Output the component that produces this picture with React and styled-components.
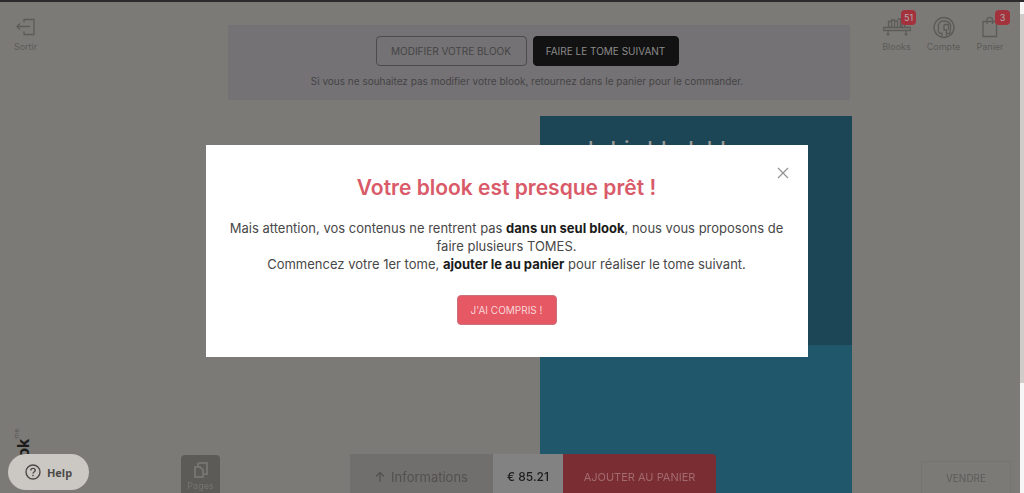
import React from "react";
import styled, { createGlobalStyle, ThemeProvider } from "styled-components";

const theme = {
  page: "#7b7a77",
  banner: "#747274",
  line: "#5c5b58",
  ink: "#4a4948",
  red: "#e55864",
  redDim: "#7a2d33",
  badge: "#a3323d",
  coverTop: "#1c4555",
  coverBottom: "#21576b",
};

const GlobalStyle = createGlobalStyle`
  * {
    box-sizing: border-box;
  }
  body {
    margin: 0;
    background-color: #7b7a77;
    font-family: Inter, "Open Sans", sans-serif;
  }
  button {
    margin: 0;
    padding: 0;
    border: none;
    font-family: inherit;
    cursor: pointer;
  }
`;

const Screen = styled.div`
  display: flex;
  flex-direction: column;
  height: 100vh;
  overflow: hidden;
  border-top: 2px solid #2b2a2c;
  background-color: ${(props) => props.theme.page};
`;

const Body = styled.div`
  display: flex;
  flex: 1;
  min-height: 0;
`;

const Side = styled.aside`
  display: flex;
  flex-direction: column;
  justify-content: space-between;
  align-items: flex-start;
  width: 228px;
  padding: 14px 13px 0;
`;

const NavItem = styled.a`
  position: relative;
  display: flex;
  flex-direction: column;
  align-items: center;
  gap: 1px;
  width: ${(props) => props.$width}px;
  color: ${(props) => props.theme.line};
  font-size: 9px;
  line-height: 12px;
  text-decoration: none;
  & svg {
    display: block;
    width: 28px;
    height: 24px;
    fill: none;
    stroke: currentColor;
    stroke-width: 1.3;
  }
`;

const Badge = styled.span`
  position: absolute;
  top: -6px;
  left: ${(props) => props.$left}px;
  width: 15px;
  height: 15px;
  border-radius: 4px;
  background-color: ${(props) => props.theme.badge};
  color: #b5adad;
  font-size: 9px;
  line-height: 15px;
  text-align: center;
`;

const Brand = styled.div`
  height: 65px;
  overflow: hidden;
  writing-mode: vertical-rl;
  transform: rotate(180deg);
  color: #1c1c1c;
  font-size: 16px;
  font-weight: 700;
  line-height: 20px;
  text-align: right;
  & sup {
    color: ${(props) => props.theme.line};
    font-size: 7px;
    font-weight: 400;
    line-height: 0;
  }
`;

const Main = styled.main`
  display: flex;
  flex: 1;
  flex-direction: column;
  gap: 16px;
  padding-top: 23px;
`;

const Banner = styled.section`
  display: flex;
  flex-direction: column;
  align-items: center;
  gap: 7px;
  margin-right: 2px;
  padding: 11px 24px 10px 0;
  background-color: ${(props) => props.theme.banner};
  color: #454446;
  font-size: 10px;
  line-height: 17px;
  & p {
    margin: 0;
  }
`;

const Actions = styled.div`
  display: flex;
  gap: 6px;
`;

const Action = styled.button`
  width: ${(props) => (props.$dark ? 146 : 151)}px;
  height: 30px;
  border: 1px solid ${(props) => (props.$dark ? "#121212" : "#4c4b4c")};
  border-radius: 4px;
  background-color: ${(props) => (props.$dark ? "#121212" : "transparent")};
  color: ${(props) => (props.$dark ? "#8b8a8a" : "#454446")};
  font-size: 10px;
`;

const Spread = styled.div`
  display: grid;
  grid-template-columns: 1fr 1fr;
  flex: 1;
`;

const Cover = styled.div`
  grid-column: 2;
  display: flex;
  flex-direction: column;
  background-color: ${(props) => props.theme.coverBottom};
`;

const CoverTitle = styled.h1`
  height: 229px;
  margin: 0;
  padding: 17px 48px;
  background-color: ${(props) => props.theme.coverTop};
  color: #9a9a98;
  font-size: 22px;
  font-weight: 500;
  line-height: 32px;
`;

const Nav = styled.nav`
  display: flex;
  width: 168px;
  padding: 14px 7px 0 21px;
`;

const ScrollTrack = styled.div`
  width: 4px;
  padding-top: 12px;
  background-color: #f6f6f6;
`;

const ScrollThumb = styled.div`
  height: 77%;
  background-color: #cfccc9;
`;

const BottomBar = styled.footer`
  position: fixed;
  right: 13px;
  bottom: 0;
  left: 181px;
  display: flex;
  align-items: flex-end;
`;

const PagesButton = styled.button`
  display: flex;
  flex-direction: column;
  align-items: center;
  gap: 1px;
  width: 39px;
  height: 38px;
  margin-right: 130px;
  padding-top: 6px;
  border-radius: 4px 4px 0 0;
  background-color: #5d5b58;
  color: #757370;
  font-size: 9px;
  line-height: 11px;
  & svg {
    width: 18px;
    height: 18px;
    fill: none;
    stroke: currentColor;
    stroke-width: 2;
  }
`;

const InfoButton = styled.button`
  display: flex;
  align-items: center;
  justify-content: center;
  gap: 6px;
  width: 143px;
  height: 39px;
  padding-top: 6px;
  background-color: #716f6d;
  color: #53514f;
  font-size: 13px;
  & svg {
    width: 10px;
    height: 12px;
    fill: none;
    stroke: currentColor;
    stroke-width: 1.3;
  }
`;

const Price = styled.div`
  width: 70px;
  height: 39px;
  padding-top: 6px;
  background-color: #828283;
  color: #1c1c1c;
  font-size: 12px;
  font-weight: 500;
  line-height: 33px;
  text-align: center;
`;

const CartButton = styled.button`
  width: 153px;
  height: 39px;
  padding-top: 6px;
  border-radius: 0 4px 0 0;
  background-color: ${(props) => props.theme.redDim};
  color: #a26b6f;
  font-size: 11px;
`;

const SellButton = styled.button`
  width: 90px;
  height: 32px;
  margin-left: auto;
  border: 1px solid #757471;
  border-bottom: none;
  background-color: transparent;
  color: ${(props) => props.theme.line};
  font-size: 10px;
`;

const HelpButton = styled.button`
  position: fixed;
  bottom: 3px;
  left: 8px;
  display: flex;
  align-items: center;
  justify-content: center;
  gap: 6px;
  width: 81px;
  height: 36px;
  border-radius: 18px;
  background-color: #cbc8c3;
  color: #4d4b49;
  font-family: "Noto Sans", sans-serif;
  font-size: 11px;
  font-weight: 700;
  & svg {
    width: 16px;
    height: 16px;
    fill: none;
    stroke: currentColor;
    stroke-width: 1.4;
  }
`;

const Overlay = styled.div`
  position: fixed;
  top: 0;
  right: 11px;
  left: 0;
  display: flex;
  justify-content: center;
  padding-top: 145px;
`;

const Dialog = styled.div`
  position: relative;
  width: 602px;
  padding: 29px 20px 32px;
  background-color: #fff;
  color: #484848;
  font-size: 13px;
  line-height: 18px;
  text-align: center;
  & h2 {
    margin: 0 0 17px;
    color: #d95b69;
    font-size: 21px;
    font-weight: 600;
    line-height: 28px;
  }
  & p {
    margin: 0 0 22px;
  }
  & strong {
    color: #1b1b1b;
    font-weight: 700;
  }
`;

const CloseButton = styled.button`
  position: absolute;
  top: 21px;
  right: 18px;
  width: 14px;
  height: 14px;
  background-color: transparent;
  & svg {
    display: block;
    fill: none;
    stroke: #929292;
    stroke-width: 1.2;
  }
`;

const ConfirmButton = styled.button`
  display: block;
  width: 100px;
  height: 30px;
  margin: 0 auto;
  border: 1px solid #c9707b;
  border-radius: 4px;
  background-color: ${(props) => props.theme.red};
  color: #f9d5d8;
  font-size: 10px;
`;

const ExitIcon = () => (
  <svg viewBox="0 0 28 24">
    <path d="M12 6.500V3.500H22V18.500H12V15.500M5 10.500H18M8 7.500L5 10.500L8 13.500" />
  </svg>
);

const ShelfIcon = () => (
  <svg viewBox="0 0 28 24">
    <path d="M5.500 11V5.500H8.500V11M8.500 11V4H11.500V11M11.500 5H14.500V11M14.500 3H17.500V11M19 4V11M21.500 6V11" />
    <path d="M0.500 11.500H27.500V14.500H0.500ZM5 14.500V18.500M23 14.500V18.500M3.500 18.500H6.500M21.500 18.500H24.500" />
  </svg>
);

const AccountIcon = () => (
  <svg viewBox="0 0 28 24">
    <circle cx="14" cy="11.500" r="10" />
    <path d="M12 20.500V17.500C7.500 17.500 8 14 8.500 12C7.500 7 10 5 14 5C19 5 21.500 8 20.500 12L20 17.500H16.500V20.500M14 8.500V14H16.500V17.500M14 8.500H18.500V14" />
  </svg>
);

const BagIcon = () => (
  <svg viewBox="0 0 28 24">
    <path d="M7 5.500H20.500V20.500H7ZM11 8V4C11 0.500 16.500 0.500 16.500 4V8" />
  </svg>
);

export default function App() {
  return (
    <ThemeProvider theme={theme}>
      <GlobalStyle />
      <Screen>
        <Body>
          <Side>
            <NavItem href="#sortir" $width={25}>
              <ExitIcon />
              Sortir
            </NavItem>
            <Brand>
              blook<sup>me</sup>
            </Brand>
          </Side>
          <Main>
            <Banner>
              <Actions>
                <Action>MODIFIER VOTRE BLOOK</Action>
                <Action $dark>FAIRE LE TOME SUIVANT</Action>
              </Actions>
              <p>
                Si vous ne souhaitez pas modifier votre blook, retournez dans le
                panier pour le commander.
              </p>
            </Banner>
            <Spread>
              <Cover>
                <CoverTitle>brbis blerlebl</CoverTitle>
              </Cover>
            </Spread>
          </Main>
          <Nav>
            <NavItem href="#blooks" $width={47}>
              <ShelfIcon />
              Blooks
              <Badge $left={28}>51</Badge>
            </NavItem>
            <NavItem href="#compte" $width={47}>
              <AccountIcon />
              Compte
            </NavItem>
            <NavItem href="#panier" $width={46}>
              <BagIcon />
              Panier
              <Badge $left={28}>3</Badge>
            </NavItem>
          </Nav>
          <ScrollTrack>
            <ScrollThumb />
          </ScrollTrack>
        </Body>
      </Screen>
      <BottomBar>
        <PagesButton>
          <svg viewBox="0 0 18 18">
            <path d="M6 2H15V13H12M3 6H8L11 9V16H3ZM6 2V6" />
          </svg>
          Pages
        </PagesButton>
        <InfoButton>
          <svg viewBox="0 0 10 12">
            <path d="M5 11V1.500M1 5.500L5 1.500L9 5.500" />
          </svg>
          Informations
        </InfoButton>
        <Price>€ 85.21</Price>
        <CartButton>AJOUTER AU PANIER</CartButton>
        <SellButton>VENDRE</SellButton>
      </BottomBar>
      <HelpButton>
        <svg viewBox="0 0 16 16">
          <circle cx="8" cy="8" r="7" />
          <path d="M5.800 6.400C5.800 3.600 10.200 3.700 10.200 6.300C10.200 8 8 7.900 8 9.600M8 10.800V12.200" />
        </svg>
        Help
      </HelpButton>
      <Overlay>
        <Dialog role="dialog" aria-labelledby="dialog-title">
          <CloseButton aria-label="Fermer">
            <svg width="14" height="14" viewBox="0 0 14 14">
              <path d="M2 2L12 12M12 2L2 12" />
            </svg>
          </CloseButton>
          <h2 id="dialog-title">Votre blook est presque prêt !</h2>
          <p>
            Mais attention, vos contenus ne rentrent pas{" "}
            <strong>dans un seul blook</strong>, nous vous proposons de
            <br />
            faire plusieurs TOMES.
            <br />
            Commencez votre 1er tome, <strong>ajouter le au panier</strong> pour
            réaliser le tome suivant.
          </p>
          <ConfirmButton>J'AI COMPRIS !</ConfirmButton>
        </Dialog>
      </Overlay>
    </ThemeProvider>
  );
}
